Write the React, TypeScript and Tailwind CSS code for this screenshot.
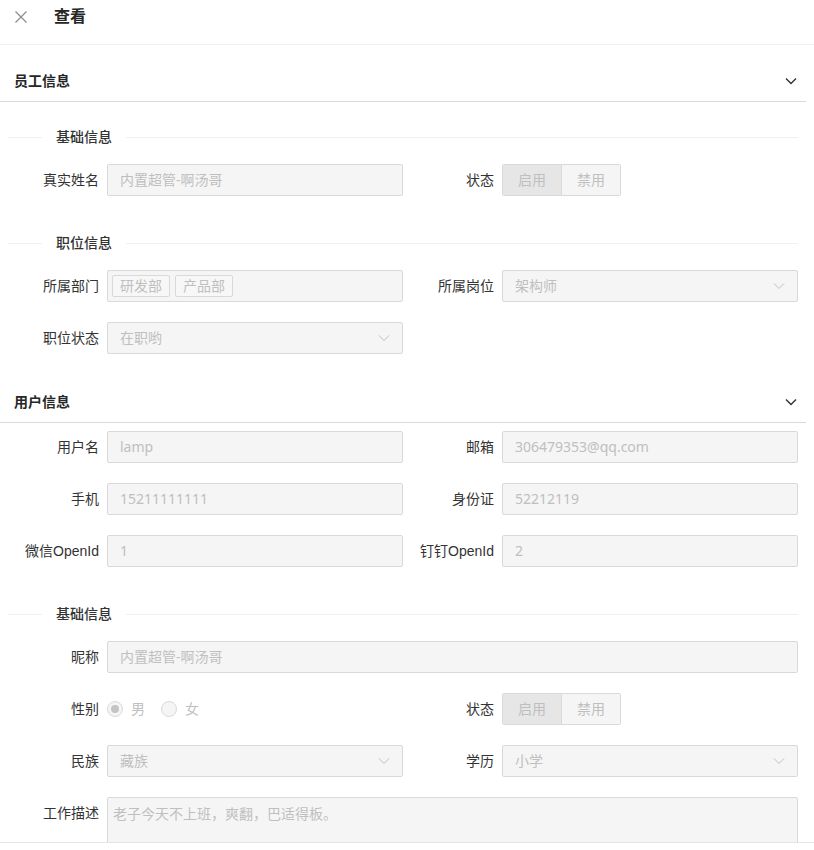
import type { ReactNode } from 'react'

const font = "font-['Liberation_Sans','Noto_Sans_CJK_SC',sans-serif]"
const valueFont = "font-['Noto_Sans','Noto_Sans_CJK_SC',sans-serif]"

function ChevronSmall() {
  return (
    <svg width="12" height="8" viewBox="0 0 12 8" fill="none" className="shrink-0">
      <path d="M1 1.5L6 6.5L11 1.5" stroke="#bfbfbf" strokeWidth="1" />
    </svg>
  )
}

function Divider({ title, className = '' }: { title: string; className?: string }) {
  return (
    <div className={`flex items-center h-[22px] px-2 ${className}`}>
      <div className="w-[34px] h-px bg-[#f0f0f0]" />
      <span className="px-[14px] text-sm leading-[22px] text-[#333] font-medium">{title}</span>
      <div className="flex-1 h-px bg-[#f0f0f0]" />
    </div>
  )
}

function Field({ label, children }: { label: string; children: ReactNode }) {
  return (
    <div className="flex items-center h-8 min-w-0">
      <label className="w-[91px] shrink-0 text-right text-sm text-[#333] whitespace-nowrap">{label}</label>
      <div className="flex-1 min-w-0 ml-2 flex items-center">{children}</div>
    </div>
  )
}

function Input({ value }: { value: string }) {
  return (
    <div className={`w-full h-8 rounded-[2px] border border-[#d9d9d9] bg-[#f5f5f5] px-3 flex items-center text-sm text-[#bfbfbf] truncate ${valueFont}`}>
      {value}
    </div>
  )
}

function Select({ value }: { value: string }) {
  return (
    <div className="w-full h-8 rounded-[2px] border border-[#d9d9d9] bg-[#f5f5f5] px-3 flex items-center justify-between text-sm text-[#bfbfbf]">
      <span>{value}</span>
      <ChevronSmall />
    </div>
  )
}

function Segmented() {
  return (
    <div className="flex h-8 rounded-[2px] border border-[#d9d9d9] overflow-hidden text-sm text-[#bfbfbf]">
      <div className="w-[59px] flex items-center justify-center bg-[#e6e6e6] border-r border-[#d9d9d9]">启用</div>
      <div className="w-[58px] flex items-center justify-center bg-[#f5f5f5]">禁用</div>
    </div>
  )
}

function Radio({ label, checked }: { label: string; checked?: boolean }) {
  return (
    <div className="flex items-center mr-2">
      <span className="w-4 h-4 rounded-full border border-[#d9d9d9] bg-[#f5f5f5] flex items-center justify-center">
        {checked && <span className="w-2 h-2 rounded-full bg-[#c4c4c4]" />}
      </span>
      <span className="px-2 text-sm text-[#bfbfbf]">{label}</span>
    </div>
  )
}

function PanelHeader({ title, className = '' }: { title: string; className?: string }) {
  return (
    <div className={`h-[41px] flex items-center justify-between pl-[14px] pr-[9px] border-b border-[#d9d9d9] ${className}`}>
      <span className="text-sm font-bold text-[#262626]">{title}</span>
      <svg width="12" height="8" viewBox="0 0 12 8" fill="none">
        <path d="M1 1.5L6 6.5L11 1.5" stroke="#333" strokeWidth="1.4" />
      </svg>
    </div>
  )
}

export default function App() {
  return (
    <div className={`w-[814px] h-[850px] bg-white flex flex-col overflow-hidden ${font}`}>
      <header className="h-[45px] shrink-0 border-b border-[#f0f0f0] flex items-start pt-[6px] pl-[15px]">
        <div className="h-[22px] flex items-center">
          <svg width="12" height="12" viewBox="0 0 12 12" fill="none">
            <path d="M0.5 0.5L11.5 11.5M11.5 0.5L0.5 11.5" stroke="#8c8c8c" strokeWidth="1.2" />
          </svg>
          <h1 className="ml-[27px] text-base font-bold text-[#262626]">查看</h1>
        </div>
      </header>

      <div className="h-[797px] shrink-0 overflow-hidden pr-2 pt-4">
        <PanelHeader title="员工信息" />
        <Divider title="基础信息" className="mt-6" />
        <div className="px-2 grid grid-cols-2 mt-4">
          <Field label="真实姓名"><Input value="内置超管-啊汤哥" /></Field>
          <Field label="状态"><Segmented /></Field>
        </div>

        <Divider title="职位信息" className="mt-9" />
        <div className="px-2 grid grid-cols-2 gap-y-5 mt-4">
          <Field label="所属部门">
            <div className="w-full h-8 rounded-[2px] border border-[#d9d9d9] bg-[#f5f5f5] pl-1 flex items-center gap-[5px]">
              <span className="h-[22px] px-[7px] flex items-center border border-[#d9d9d9] bg-[#f7f7f7] rounded-[2px] text-sm text-[#bfbfbf]">研发部</span>
              <span className="h-[22px] px-[7px] flex items-center border border-[#d9d9d9] bg-[#f7f7f7] rounded-[2px] text-sm text-[#bfbfbf]">产品部</span>
            </div>
          </Field>
          <Field label="所属岗位"><Select value="架构师" /></Field>
          <Field label="职位状态"><Select value="在职哟" /></Field>
        </div>

        <PanelHeader title="用户信息" className="mt-7" />
        <div className="px-2 grid grid-cols-2 gap-y-5 mt-2">
          <Field label="用户名"><Input value="lamp" /></Field>
          <Field label="邮箱"><Input value="306479353@qq.com" /></Field>
          <Field label="手机"><Input value="15211111111" /></Field>
          <Field label="身份证"><Input value="52212119" /></Field>
          <Field label="微信OpenId"><Input value="1" /></Field>
          <Field label="钉钉OpenId"><Input value="2" /></Field>
        </div>

        <Divider title="基础信息" className="mt-9" />
        <div className="px-2 mt-4">
          <Field label="昵称"><Input value="内置超管-啊汤哥" /></Field>
        </div>
        <div className="px-2 grid grid-cols-2 gap-y-5 mt-5">
          <Field label="性别">
            <Radio label="男" checked />
            <Radio label="女" />
          </Field>
          <Field label="状态"><Segmented /></Field>
          <Field label="民族"><Select value="藏族" /></Field>
          <Field label="学历"><Select value="小学" /></Field>
        </div>
        <div className="px-2 mt-5 flex items-start">
          <label className="w-[91px] shrink-0 h-8 flex items-center justify-end text-sm text-[#333]">工作描述</label>
          <div className="flex-1 ml-2 h-[64px] rounded-[2px] border border-[#d9d9d9] bg-[#f5f5f5] p-[5px] text-sm leading-[22px] text-[#bfbfbf]">
            老子今天不上班，爽翻，巴适得板。
          </div>
        </div>
      </div>

      <footer className="flex-1 border-t border-[#e5e5e5]" />
    </div>
  )
}
